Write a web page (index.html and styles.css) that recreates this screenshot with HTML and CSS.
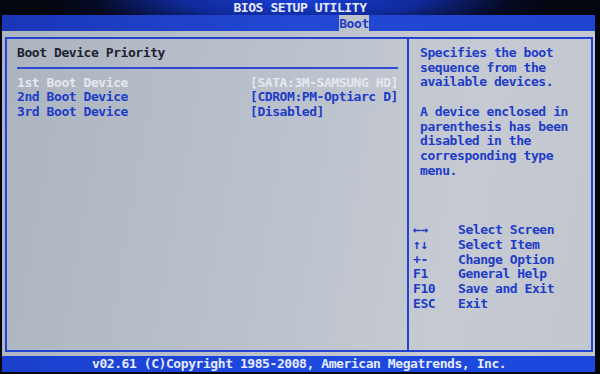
FILE: index.html
```html
<!DOCTYPE html>
<html lang="en">
<head>
    <meta charset="UTF-8">
    <meta name="viewport" content="width=device-width, initial-scale=1.0">
    <title>BIOS Setup Utility</title>
    <link rel="stylesheet" href="styles.css">
</head>
<body>
    <div class="screen">
        <div class="title">BIOS SETUP UTILITY</div>
        <div class="tabs"><span class="tab">Boot</span></div>

        <div class="main">
            <div class="frame">
                <div class="left">
                    <div class="heading">Boot Device Priority</div>
                    <div class="rule"></div>
                    <div class="row selected">
                        <span class="label">1st Boot Device</span>
                        <span class="value">[SATA:3M-SAMSUNG HD]</span>
                    </div>
                    <div class="row">
                        <span class="label">2nd Boot Device</span>
                        <span class="value">[CDROM:PM-Optiarc D]</span>
                    </div>
                    <div class="row">
                        <span class="label">3rd Boot Device</span>
                        <span class="value">[Disabled]</span>
                    </div>
                </div>

                <div class="right">
                    <div class="help">
                        <div>Specifies the boot</div>
                        <div>sequence from the</div>
                        <div>available devices.</div>
                        <div>&nbsp;</div>
                        <div>A device enclosed in</div>
                        <div>parenthesis has been</div>
                        <div>disabled in the</div>
                        <div>corresponding type</div>
                        <div>menu.</div>
                    </div>
                    <div class="keys">
                        <div class="key"><span class="k">←→</span><span>Select Screen</span></div>
                        <div class="key"><span class="k">↑↓</span><span>Select Item</span></div>
                        <div class="key"><span class="k">+-</span><span>Change Option</span></div>
                        <div class="key"><span class="k">F1</span><span>General Help</span></div>
                        <div class="key"><span class="k">F10</span><span>Save and Exit</span></div>
                        <div class="key"><span class="k">ESC</span><span>Exit</span></div>
                    </div>
                </div>
            </div>
        </div>

        <div class="footer">v02.61 (C)Copyright 1985-2008, American Megatrends, Inc.</div>
    </div>
</body>
</html>
```

FILE: styles.css
```css
body {
    margin: 0;
    width: 600px;
    height: 374px;
    overflow: hidden;
    background-color: #03060c;
    font-family: "DejaVu Sans Mono", "Liberation Mono", monospace;
    font-weight: bold;
    font-size: 13px;
    letter-spacing: -0.43px;
}
.screen {
    margin-left: 2px;
    width: 593px;
    display: flex;
    flex-direction: column;
}
.title {
    height: 15px;
    line-height: 15px;
    text-align: center;
    color: #e4e9ff;
    background: radial-gradient(ellipse 260px 40px at 50% 0%, #1a3fd8 0%, #0f2a9a 45%, #050a24 80%, #03060c 100%);
    margin-left: -2px;
    margin-right: -5px;
}
.tabs {
    height: 16px;
    background: linear-gradient(to right, #1a36b8, #2348d4 50%, #1f45d0);
    display: flex;
}
.tab {
    margin-left: 337px;
    width: 30px;
    height: 16px;
    line-height: 17px;
    text-align: center;
    background-color: #bcc3cd;
    color: #1d3cc8;
}
.main {
    height: 325px;
    padding: 6px 2px 4px 3px;
    box-sizing: border-box;
    background: linear-gradient(100deg, #acb4c0 0%, #b9c0cb 40%, #c6cad2 75%, #c2c6ce 100%);
}
.frame {
    height: 100%;
    box-sizing: border-box;
    border: 2px solid #2243d4;
    display: flex;
}
.left {
    width: 402px;
    border-right: 2px solid #2243d4;
    padding: 7px 0 0 10px;
    box-sizing: border-box;
    line-height: 14.7px;
}
.heading {
    color: #1c2330;
}
.rule {
    margin: 6px 0 7px 0;
    width: 381px;
    height: 2px;
    background-color: #2a4ad4;
}
.row {
    display: flex;
    color: #1d3cc8;
}
.row.selected {
    color: #e4e8ee;
}
.label {
    width: 233px;
}
.right {
    flex: 1;
    padding: 7px 0 0 11px;
    color: #1d3cc8;
    line-height: 14.7px;
}
.keys {
    margin-top: 45px;
    margin-left: -7px;
}
.key {
    display: flex;
}
.k {
    width: 45px;
}
.footer {
    height: 16px;
    line-height: 16px;
    padding-left: 90px;
    color: #e6ebff;
    background: linear-gradient(to right, #1a3fcc, #1d4ae0 50%, #1c47dc);
}
```
